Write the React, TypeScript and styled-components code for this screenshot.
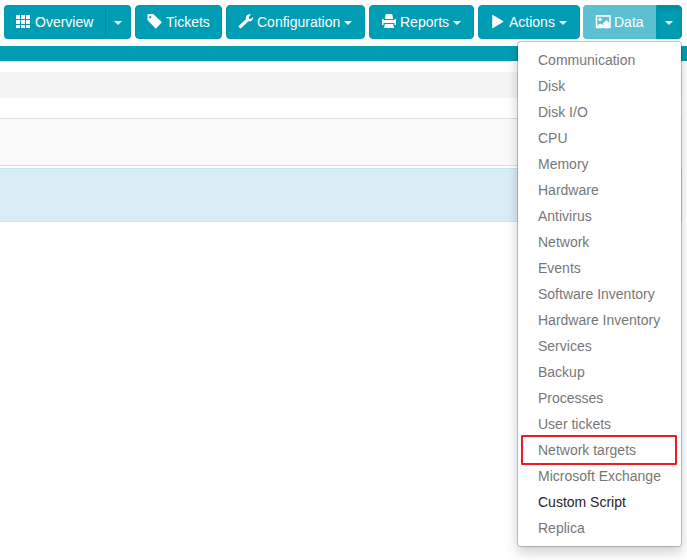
import React from "react";
import styled, { createGlobalStyle, css } from "styled-components";

const Global = createGlobalStyle`
  * { box-sizing: border-box; }
  body { margin: 0; background: #fff; overflow: hidden; font: 14px/20px "Liberation Sans", Arial, sans-serif; }
`;

const Page = styled.div`
  width: 687px;
  height: 560px;
  overflow: hidden;
`;
const Toolbar = styled.nav`
  display: flex;
  height: 46px;
  padding: 5px 0 0 4px;
`;
const Group = styled.div<{ $width: number; $gap?: number }>`
  position: relative;
  display: flex;
  flex: none;
  width: ${(p) => p.$width}px;
  height: 34px;
  margin-right: ${(p) => p.$gap ?? 4}px;
`;
const Button = styled.button<{ $side?: "left" | "right"; $faded?: boolean; $pressed?: boolean }>`
  display: flex;
  flex: ${(p) => (p.$side === "right" ? "0 0 26px" : "1")};
  align-items: center;
  justify-content: ${(p) => (p.$side === "right" ? "center" : "flex-start")};
  padding: ${(p) => (p.$side === "right" ? "0" : "0 0 0 11px")};
  border: 1px solid #0097af;
  border-radius: 4px;
  background: #009db5;
  color: #fff;
  font: inherit;
  white-space: nowrap;
  ${(p) => p.$side === "left" && css`border-radius: 4px 0 0 4px; border-right: 0;`}
  ${(p) => p.$side === "right" && css`border-radius: 0 4px 4px 0; border-left-color: #008ca2;`}
  ${(p) => p.$faded && css`background: #5bc0d0; border-color: #5bc0d0;`}
  ${(p) => p.$pressed && css`border-left-color: #0097af; box-shadow: inset 0 3px 5px rgba(0, 0, 0, 0.125);`}
`;
const Icon = styled.svg`
  flex: none;
  width: 15px;
  height: 14px;
  margin-right: 4px;
  overflow: visible;
  fill: currentColor;
`;
const Caret = styled.span<{ $inline?: boolean }>`
  border: 4px solid transparent;
  border-top-color: #fff;
  border-bottom: 0;
  margin: ${(p) => (p.$inline ? "2px 0 0 4px" : "2px 0 0")};
`;
const Band = styled.div`
  height: 15px;
  background: #009db5;
`;
const Content = styled.main`
  width: 682px;
  padding-top: 11px;
`;
const Crumbs = styled.div`
  height: 26px;
  margin-bottom: 20px;
  background: #f4f4f4;
`;
const Panel = styled.div`
  height: 48px;
  margin-bottom: 2px;
  border: solid #ddd;
  border-width: 1px 0;
  background: #f9f9f9;
`;
const Notice = styled.div`
  height: 54px;
  border: solid #bce8f1;
  border-width: 1px 0;
  background: #d9edf7;
`;
const Menu = styled.ul`
  position: absolute;
  z-index: 2;
  top: 36px;
  right: 0;
  width: 165px;
  height: 506px;
  margin: 0;
  padding: 5px 4px;
  list-style: none;
  border: 1px solid rgba(0, 0, 0, 0.2);
  border-radius: 4px;
  background: #fff;
  background-clip: padding-box;
  box-shadow: 0 6px 12px rgba(0, 0, 0, 0.175);
`;
const Item = styled.li<{ $strong?: boolean; $marked?: boolean }>`
  position: relative;
  height: 26px;
  padding: 3px 0 3px 16px;
  color: ${(p) => (p.$strong ? "#262626" : "#777")};
  white-space: nowrap;
  ${(p) => p.$marked && css`
    &::after {
      content: "";
      position: absolute;
      inset: -2px 0 -2px -1px;
      border: 2px solid #ed1c24;
      border-radius: 1px;
    }
  `}
`;

const GridIcon = () => (
  <Icon viewBox="0 0 15 14" shapeRendering="crispEdges">
    {[0, 5, 10].map((y) => [0, 5, 10].map((x) => <rect key={`${x}-${y}`} x={x} y={y} width="4" height={y === 10 ? 3 : 4} />))}
  </Icon>
);
const TagIcon = () => (
  <Icon viewBox="0 0 15 14"><path fillRule="evenodd" d="M1.3-1h4.6q.5 0 .9.4l7.6 7.4q.5.5 0 1L9.3 13.2q-.5.5-1 0L.9 5.6Q.5 5.2.5 4.7V-.2q0-.8.8-.8ZM3.2.9a1.2 1.2 0 1 0 0 2.4 1.2 1.2 0 0 0 0-2.4Z" /></Icon>
);
const WrenchIcon = () => (
  <Icon viewBox="0 0 15 14"><path d="M13.1-.4 10.7 2l.5 1.7 1.7.3L15.2 1.8q.2 2.4-1.4 3.7-1.4 1.2-3.3.7L3.3 13.1q-.7.7-1.5 0l-1-1q-.7-.7.1-1.4l6.9-6.4Q7.3 2.2 8.7.6 10.7-1.2 13.1-.4Z" /></Icon>
);
const PrintIcon = () => (
  <Icon viewBox="0 0 15 14">
    <path d="M4.5 0Q4.7-1 5.5-1h5q.8 0 1 1l.5 4H4L4.5 0Z" />
    <path d="M1 4h1.5v1h11V4H15v6h-1.5V8h-11v2H1V4Z" />
    <path d="M4 9h8l1.2 4H2.8L4 9Z" />
  </Icon>
);
const PlayIcon = () => (
  <Icon viewBox="0 0 15 14"><path d="M2.2.2q0-.6.6-.2l10.3 6.1q.7.5 0 1L2.8 13.2q-.6.3-.6-.4V.2Z" /></Icon>
);
const PictureIcon = () => (
  <Icon viewBox="-60 0 1200 1120">
    <path fillRule="evenodd" d="M50 0H1150Q1200 0 1200 50V1000Q1200 1050 1150 1050H50Q0 1050 0 1000V50Q0 0 50 0ZM120 130V820L347 700L645 800L571 680L864 400L1080 640V130Z" />
    <circle cx="342" cy="350" r="134" />
  </Icon>
);

const entries = [
  "Communication", "Disk", "Disk I/O", "CPU", "Memory", "Hardware", "Antivirus", "Network", "Events",
  "Software Inventory", "Hardware Inventory", "Services", "Backup", "Processes", "User tickets",
  "Network targets", "Microsoft Exchange", "Custom Script", "Replica",
];

export default function App() {
  return (
    <Page>
      <Global />
      <Toolbar>
        <Group $width={127}>
          <Button $side="left"><GridIcon />Overview</Button>
          <Button $side="right" aria-label="Overview options"><Caret /></Button>
        </Group>
        <Group $width={87}><Button><TagIcon />Tickets</Button></Group>
        <Group $width={139}><Button><WrenchIcon />Configuration<Caret $inline /></Button></Group>
        <Group $width={105}><Button><PrintIcon />Reports<Caret $inline /></Button></Group>
        <Group $width={102} $gap={3}><Button><PlayIcon />Actions<Caret $inline /></Button></Group>
        <Group $width={99} $gap={0}>
          <Button $side="left" $faded><PictureIcon />Data</Button>
          <Button $side="right" $pressed aria-label="Data options"><Caret /></Button>
          <Menu>
            {entries.map((name) => (
              <Item key={name} $strong={name === "Custom Script"} $marked={name === "Network targets"}>{name}</Item>
            ))}
          </Menu>
        </Group>
      </Toolbar>
      <Band />
      <Content><Crumbs /><Panel /><Notice /></Content>
    </Page>
  );
}
